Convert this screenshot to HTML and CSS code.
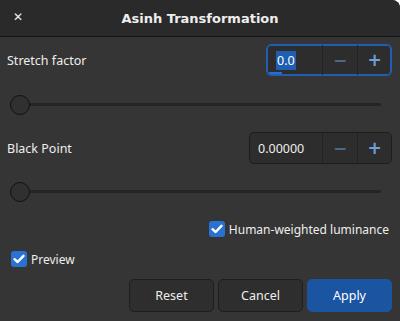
FILE: index.html
```html
<!DOCTYPE html>
<html>
<head>
<meta charset="utf-8">
<link rel="stylesheet" href="styles.css">
</head>
<body>
<div class="window">
  <div class="header">
    <span class="close">✕</span>
    <span class="title">Asinh Transformation</span>
  </div>
  <div class="content">
    <div class="row first">
      <span class="label">Stretch factor</span>
      <div class="spin focused">
        <div class="entry narrow"><span class="sel">0.0</span><span class="underline"></span></div>
        <div class="sbtn minus">−</div>
        <div class="sbtn plus">+</div>
      </div>
    </div>
    <div class="slider s1"><div class="track"></div><div class="knob"></div></div>
    <div class="row second">
      <span class="label">Black Point</span>
      <div class="spin">
        <div class="entry wide">0.00000</div>
        <div class="sbtn minus">−</div>
        <div class="sbtn plus">+</div>
      </div>
    </div>
    <div class="slider s2"><div class="track"></div><div class="knob"></div></div>
    <div class="check right">
      <span class="box"><svg viewBox="0 0 16 16" width="16" height="16"><path d="M3.5 8.2 L6.6 11 L12.5 4.8" fill="none" stroke="#fff" stroke-width="2.4" stroke-linecap="round" stroke-linejoin="round"/></svg></span>
      <span class="ctext">Human-weighted luminance</span>
    </div>
    <div class="check left">
      <span class="box"><svg viewBox="0 0 16 16" width="16" height="16"><path d="M3.5 8.2 L6.6 11 L12.5 4.8" fill="none" stroke="#fff" stroke-width="2.4" stroke-linecap="round" stroke-linejoin="round"/></svg></span>
      <span class="ctext">Preview</span>
    </div>
    <div class="buttons">
      <div class="btn">Reset</div>
      <div class="btn">Cancel</div>
      <div class="btn apply">Apply</div>
    </div>
  </div>
</div>
</body>
</html>
```

FILE: styles.css
```css
html, body {
  margin: 0;
  padding: 0;
  background: #ffffff;
}
.window {
  width: 400px;
  height: 321px;
  background: #353535;
  border-top-right-radius: 8px;
  overflow: hidden;
  font-family: "Noto Sans", "Open Sans", sans-serif;
  font-size: 12px;
  color: #eeeeec;
}
.header {
  height: 36px;
  background: #2a2a2a;
  border-bottom: 1px solid #141414;
  display: flex;
  align-items: center;
  justify-content: center;
  position: relative;
}
.close {
  position: absolute;
  left: 13px;
  top: 10px;
  font-family: "DejaVu Sans", sans-serif;
  font-size: 12px;
  font-weight: bold;
  color: #f0f0f0;
}
.title {
  font-family: "DejaVu Sans", sans-serif;
  font-weight: bold;
  font-size: 13px;
  color: #eeeeec;
}
.content {
  padding: 0 8px 0 7px;
  display: flex;
  flex-direction: column;
}
.row {
  display: flex;
  align-items: center;
  justify-content: space-between;
}
.row.first { margin-top: 7px; }
.row.second { margin-top: 17px; }
.label { font-size: 12.5px; }
.spin {
  display: flex;
  height: 30px;
  border: 1px solid #1c1c1c;
  border-radius: 5px;
  background: #2d2d2d;
  box-sizing: content-box;
}
.spin.focused {
  border-color: #1f5eb0;
  box-shadow: 0 0 0 1px #1f5eb0 inset;
}
.entry {
  display: flex;
  align-items: center;
  padding-left: 8px;
  box-sizing: border-box;
  position: relative;
  font-size: 12.5px;
}
.entry.narrow { width: 55px; padding-left: 9px; }
.entry.wide { width: 72px; }
.sel {
  background: #1f5eb0;
  color: #ffffff;
  padding: 1px 1px;
}
.underline {
  position: absolute;
  left: 2px;
  bottom: 1px;
  width: 13px;
  height: 2px;
  background: #2a6ed0;
}
.sbtn {
  width: 35px;
  border-left: 1px solid #232323;
  display: flex;
  align-items: center;
  justify-content: center;
  font-family: "DejaVu Sans", sans-serif;
  font-weight: bold;
  font-size: 17px;
  box-sizing: border-box;
}
.sbtn.plus { width: 34px; }
.sbtn.minus { color: #4a6888; }
.sbtn.plus { color: #6ea0dc; }
.slider {
  position: relative;
  height: 20px;
  margin-left: 3px;
  width: 371px;
}
.s1 { margin-top: 19px; }
.s2 { margin-top: 18px; }
.track {
  position: absolute;
  left: 0;
  right: 0;
  top: 8px;
  height: 3px;
  background: #242424;
  border-radius: 2px;
}
.knob {
  position: absolute;
  left: 0;
  top: 0;
  width: 18px;
  height: 18px;
  border: 1px solid #111111;
  border-radius: 50%;
  background: #303030;
}
.check {
  display: flex;
  align-items: center;
  gap: 4px;
  height: 16px;
}
.check.right {
  align-self: flex-end;
  margin-top: 19px;
  margin-right: 3px;
}
.check.left {
  align-self: flex-start;
  margin-top: 14px;
  margin-left: 4px;
}
.box {
  width: 16px;
  height: 16px;
  border-radius: 3px;
  background: #2a72d2;
  display: flex;
}
.ctext { font-size: 12px; }
.buttons {
  display: flex;
  justify-content: flex-end;
  gap: 4px;
  margin-top: 12px;
}
.btn {
  width: 85px;
  height: 33px;
  box-sizing: border-box;
  border: 1px solid #1e1e1e;
  border-radius: 5px;
  background: #2e2e2e;
  display: flex;
  align-items: center;
  justify-content: center;
  font-size: 12.5px;
}
.btn.apply {
  background: #1b54a0;
  border-color: #1b54a0;
  color: #ffffff;
}
```
